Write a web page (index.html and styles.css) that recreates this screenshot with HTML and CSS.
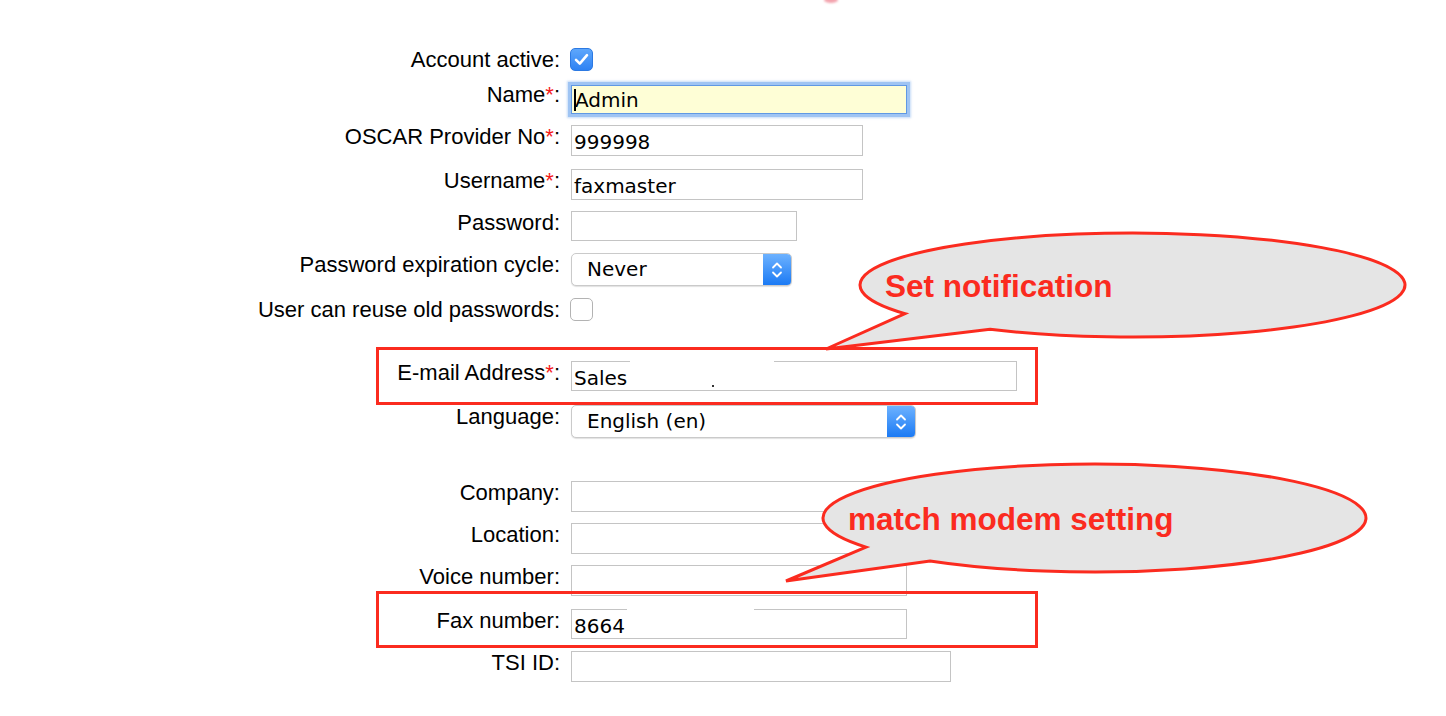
FILE: index.html
```html
<!DOCTYPE html>
<html lang="en">
<head>
<meta charset="utf-8">
<title>Provider settings</title>
<link rel="stylesheet" href="styles.css">
</head>
<body>
<div class="page">
  <div class="form">
    <div class="lbl">Account active:</div>
    <div class="fld"><span class="cb cb-on"><svg width="23" height="23" viewBox="0 0 23 23"><path d="M6 11.8 L9.8 15.6 L17 7.2" fill="none" stroke="#fff" stroke-width="2.6" stroke-linecap="round" stroke-linejoin="round"/></svg></span></div>

    <div class="lbl lbl-name">Name<span class="req">*</span>:</div>
    <div class="fld"><div class="inp inp-focus w-name"><span class="caret"></span>Admin</div></div>

    <div class="lbl">OSCAR Provider No<span class="req">*</span>:</div>
    <div class="fld"><div class="inp w-m">999998</div></div>

    <div class="lbl">Username<span class="req">*</span>:</div>
    <div class="fld"><div class="inp w-m">faxmaster</div></div>

    <div class="lbl">Password:</div>
    <div class="fld"><div class="inp w-s h30"></div></div>

    <div class="lbl">Password expiration cycle:</div>
    <div class="fld"><div class="sel w-sel1"><span class="sel-val">Never</span><span class="sel-cap"><svg width="14" height="24" viewBox="0 0 14 24"><path d="M3 9.5 L7 5.5 L11 9.5 M3 14.5 L7 18.5 L11 14.5" fill="none" stroke="#fff" stroke-width="1.8" stroke-linecap="round" stroke-linejoin="round"/></svg></span></div></div>

    <div class="lbl">User can reuse old passwords:</div>
    <div class="fld"><span class="cb cb-off"></span></div>

    <div class="lbl">E-mail Address<span class="req">*</span>:</div>
    <div class="fld"><div class="inp w-email h30">Sales</div><span class="mask mask-email"></span><span class="dot"></span></div>

    <div class="lbl">Language:</div>
    <div class="fld"><div class="sel w-sel2"><span class="sel-val">English (en)</span><span class="sel-cap"><svg width="14" height="24" viewBox="0 0 14 24"><path d="M3 9.5 L7 5.5 L11 9.5 M3 14.5 L7 18.5 L11 14.5" fill="none" stroke="#fff" stroke-width="1.8" stroke-linecap="round" stroke-linejoin="round"/></svg></span></div></div>

    <div class="lbl">Company:</div>
    <div class="fld"><div class="inp w-l"></div></div>

    <div class="lbl">Location:</div>
    <div class="fld"><div class="inp w-l"></div></div>

    <div class="lbl">Voice number:</div>
    <div class="fld"><div class="inp w-l"></div></div>

    <div class="lbl">Fax number:</div>
    <div class="fld"><div class="inp w-l h30">8664</div><span class="mask mask-fax"></span></div>

    <div class="lbl">TSI ID:</div>
    <div class="fld"><div class="inp w-xl"></div></div>
  </div>

  <div class="mark mark-email"></div>
  <div class="mark mark-fax"></div>

  <svg class="annot" width="1446" height="716" viewBox="0 0 1446 716">
    <defs>
      <filter id="soft" x="-50%" y="-50%" width="200%" height="200%"><feGaussianBlur stdDeviation="1.2"/></filter>
    </defs>
    <ellipse cx="831" cy="0" rx="7" ry="3" fill="#f3a3ad" filter="url(#soft)"/>
    <path class="bubble" d="M905 313.62 L826 349 L990 329.32 A272.5 52 0 1 0 905 313.62 Z"/>
    <text class="btxt" x="885" y="297">Set notification</text>
    <path class="bubble" d="M866 547.17 L786 581 L930 560.96 A271.5 54 0 1 0 866 547.17 Z"/>
    <text class="btxt" x="848" y="530">match modem setting</text>
  </svg>
</div>
</body>
</html>
```

FILE: styles.css
```css
* { box-sizing: border-box; }

html, body {
  margin: 0;
  padding: 0;
  background: #fff;
}

.page {
  position: relative;
  width: 1446px;
  height: 716px;
  overflow: hidden;
  font-family: "Liberation Sans", Arial, sans-serif;
  color: #000;
}

.form {
  display: grid;
  grid-template-columns: 560px auto;
  grid-template-rows: 37px 40px 44px 42px 42px 45px 63px 44px 76px 42px 42px 44px 42px 40px;
  column-gap: 11px;
  align-items: start;
  padding-top: 48px;
}

.lbl {
  text-align: right;
  font-size: 22px;
  line-height: 24px;
  white-space: nowrap;
}

.lbl-name { margin-top: -2px; }

.req {
  color: #f41a1a;
}

.fld {
  position: relative;
  display: flex;
  align-items: flex-start;
}

.inp {
  height: 31px;
  border: 1px solid #c4c4c4;
  background: #fff;
  font-family: "DejaVu Sans", sans-serif;
  font-size: 20px;
  line-height: 33px;
  padding-left: 2px;
  white-space: nowrap;
  overflow: hidden;
}

.h30 { height: 30px; line-height: 32px; }

.w-s { width: 226px; }
.w-m { width: 292px; }
.w-l { width: 336px; }
.w-xl { width: 380px; }
.w-email { width: 446px; }
.w-name { width: 336px; }

.inp-focus {
  position: relative;
  height: 29px;
  line-height: 29px;
  padding-left: 3px;
  background: #fefed6;
  border: 1px solid #5f98e4;
  box-shadow: 0 0 0 3px #9fc4f3, 0 0 2px 4px rgba(150, 190, 240, 0.55);
}

.caret {
  position: absolute;
  left: 2px;
  top: 3px;
  width: 2px;
  height: 22px;
  background: #000;
}

.cb {
  display: block;
  width: 23px;
  height: 23px;
  margin-left: -1px;
  border-radius: 5px;
}

.cb-on {
  background: linear-gradient(#5ea7fc, #2e82f3);
  border: 1px solid #2c79e2;
}

.cb-on svg { display: block; margin: -1px; }

.cb-off {
  background: #fff;
  border: 1px solid #b3b3b3;
}

.sel {
  display: flex;
  align-items: center;
  height: 33px;
  border: 1px solid #cacaca;
  border-radius: 5px;
  overflow: hidden;
  background: #fff;
  box-shadow: 0 1px 1px rgba(0, 0, 0, 0.12);
  font-family: "DejaVu Sans", sans-serif;
  font-size: 20px;
}

.w-sel1 { width: 221px; }
.w-sel2 { width: 345px; }

.sel-val {
  flex: 1;
  padding-left: 15px;
  line-height: 33px;
}

.sel-cap {
  width: 28px;
  align-self: stretch;
  display: flex;
  align-items: center;
  justify-content: center;
  background: linear-gradient(#6db2ff, #1b7af4);
}

.mask {
  position: absolute;
  top: 0;
  height: 1px;
  background: #fff;
}

.mask-email { left: 59px; width: 144px; }
.mask-fax { left: 56px; width: 127px; }

.dot {
  position: absolute;
  left: 141px;
  top: 24px;
  width: 2px;
  height: 2px;
  background: #333;
}

.mark {
  position: absolute;
  left: 376px;
  width: 662px;
  border: 3px solid #fb2b1f;
}

.mark-email { top: 347px; height: 58px; }
.mark-fax { top: 591px; height: 57px; }

.annot {
  position: absolute;
  left: 0;
  top: 0;
  pointer-events: none;
}

.bubble {
  fill: #e5e5e5;
  stroke: #fb2b1f;
  stroke-width: 3;
  stroke-linejoin: miter;
}

.btxt {
  font-family: "Liberation Sans", Arial, sans-serif;
  font-weight: bold;
  font-size: 31.5px;
  fill: #fb2b1f;
}
```
